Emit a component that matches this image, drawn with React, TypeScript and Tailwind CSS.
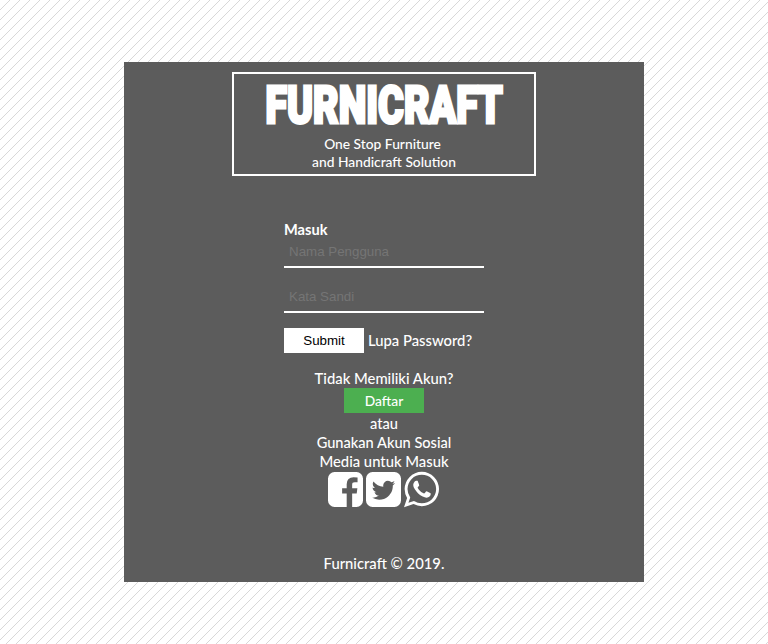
import type { ReactNode } from "react";

const FACEBOOK =
  "M1376 128q119 0 203.5 84.5t84.5 203.5v960q0 119-84.5 203.5t-203.5 84.5h-188v-595h199l30-232h-229v-148q0-56 23.5-84t91.5-28l122-1v-207q-63-9-178-9-136 0-217.5 80t-81.5 226v171h-200v232h200v595h-532q-119 0-203.5-84.5t-84.5-203.5v-960q0-119 84.5-203.5t203.5-84.5h960z";
const TWITTER =
  "M1408 610q-56 25-121 34 68-40 93-117-65 38-134 51-61-66-153-66-87 0-148.5 61.5t-61.5 148.5q0 29 5 48-129-7-242-65t-192-155q-29 50-29 106 0 114 91 175-47-1-100-26v2q0 75 50 133.5t123 72.5q-29 8-51 8-13 0-39-4 21 63 74.5 104t121.5 42q-116 90-261 90-26 0-50-3 148 94 322 94 112 0 210-35.5t168-95 120.5-137 75-162 24.5-168.5q0-18-1-27 63-45 105-109zm256-194v960q0 119-84.5 203.5t-203.5 84.5h-960q-119 0-203.5-84.5t-84.5-203.5v-960q0-119 84.5-203.5t203.5-84.5h960q119 0 203.5 84.5t84.5 203.5z";
const WHATSAPP =
  "M1113 974q13 0 97.5 44t89.5 53q2 5 2 15 0 33-17 76-16 39-71 65.5t-102 26.5q-57 0-190-62-98-45-170-118t-148-185q-72-107-71-194v-8q3-91 74-158 24-22 52-22 6 0 18 1.5t19 1.5q19 0 26.5 6.5t15.5 27.5q8 20 33 88t25 75q0 21-34.5 57.5t-34.5 46.5q0 7 5 15 34 73 102 137 56 53 151 101 12 7 22 7 15 0 54-48.5t52-48.5zm-203 530q127 0 243.5-50t200.5-134 134-200.5 50-243.5-50-243.5-134-200.5-200.5-134-243.5-50-243.5 50-200.5 134-134 200.5-50 243.5q0 203 120 368l-79 233 242-77q158 103 345 103zm0-1382q153 0 292.5 60t240.5 161 161 240.5 60 292.5-60 292.5-161 240.5-240.5 161-292.5 60q-195 0-365-94l-417 134 136-405q-108-178-108-389 0-153 60-292.5t161-240.5 240.5-161 292.5-60z";

function SocialIcon({ path, label }: { path: string; label: string }) {
  return (
    <a href="#" aria-label={label} className="block">
      <svg viewBox="128 128 1536 1536" className="block size-[35px] overflow-visible fill-white">
        <path d={path} />
      </svg>
    </a>
  );
}

function Line({ className, children }: { className: string; children: ReactNode }) {
  return <p className={`whitespace-nowrap text-center ${className}`}>{children}</p>;
}

export default function App() {
  return (
    <div className="h-[644px] w-[768px] overflow-hidden bg-white bg-[linear-gradient(135deg,#ffffff_48%,#d8d8d8_48%,#d8d8d8_52%,#ffffff_52%)] bg-[length:10px_10px] pt-[62px] font-['Lato','Carlito',sans-serif] text-[14.6px] leading-[18px] font-medium text-white">
      <main className="mx-auto flex h-[520px] w-[520px] flex-col items-center bg-[#5c5c5c] pt-[10px]">
        <header className="h-[104px] w-[304px] border-2 border-white">
          <h1 className="flex h-[61px] items-center justify-center pt-px font-['Roboto','Liberation_Sans',sans-serif] text-[52px] leading-[55px] font-black whitespace-nowrap">
            <span className="inline-block scale-x-[0.755] [-webkit-text-stroke:3px_white]">FURNICRAFT</span>
          </h1>
          <Line className="pr-[3px] text-[13.8px]">One Stop Furniture</Line>
          <Line className="text-[13.8px]">and Handicraft Solution</Line>
        </header>

        <form className="mt-[43px] w-[200px]">
          <label className="block h-[20px] leading-[21px] font-bold">Masuk</label>
          <input
            type="text"
            placeholder="Nama Pengguna"
            className="block h-[29px] w-full border-b-2 border-white bg-transparent px-[5px] pb-[2px] font-['Liberation_Sans',sans-serif] text-[13.33px] font-normal outline-none placeholder:text-[#757575]"
          />
          <input
            type="password"
            placeholder="Kata Sandi"
            className="mt-[16px] block h-[29px] w-full border-b-2 border-white bg-transparent px-[5px] pb-[2px] font-['Liberation_Sans',sans-serif] text-[13.33px] font-normal outline-none placeholder:text-[#757575]"
          />
          <div className="mt-[15px] flex h-[25px] items-start gap-[4px]">
            <button
              type="button"
              className="h-[25px] w-[80px] bg-white font-['Liberation_Sans',sans-serif] text-[13.33px] font-normal text-black"
            >
              Submit
            </button>
            <a href="#" className="whitespace-nowrap pt-[3px] text-[14.8px]">
              Lupa Password?
            </a>
          </div>
        </form>

        <section className="mt-[17px] flex flex-col items-center">
          <Line className="h-[18px] text-[14.8px] leading-[16px]">Tidak Memiliki Akun?</Line>
          <button type="button" className="h-[25px] w-[80px] bg-[#4caf50] text-[13.8px] leading-[24px]">
            Daftar
          </button>
          <Line className="mt-[2px] h-[19px] leading-[17px]">atau</Line>
          <Line className="h-[19px] leading-[17px]">Gunakan Akun Sosial</Line>
          <Line className="h-[19px] text-[14.8px] leading-[16px]">Media untuk Masuk</Line>
          <div className="flex gap-[3px]">
            <SocialIcon path={FACEBOOK} label="Facebook" />
            <SocialIcon path={TWITTER} label="Twitter" />
            <SocialIcon path={WHATSAPP} label="WhatsApp" />
          </div>
        </section>

        <footer className="mt-[48px]">
          <Line className="text-[14.8px] leading-[17px]">Furnicraft © 2019.</Line>
        </footer>
      </main>
    </div>
  );
}
